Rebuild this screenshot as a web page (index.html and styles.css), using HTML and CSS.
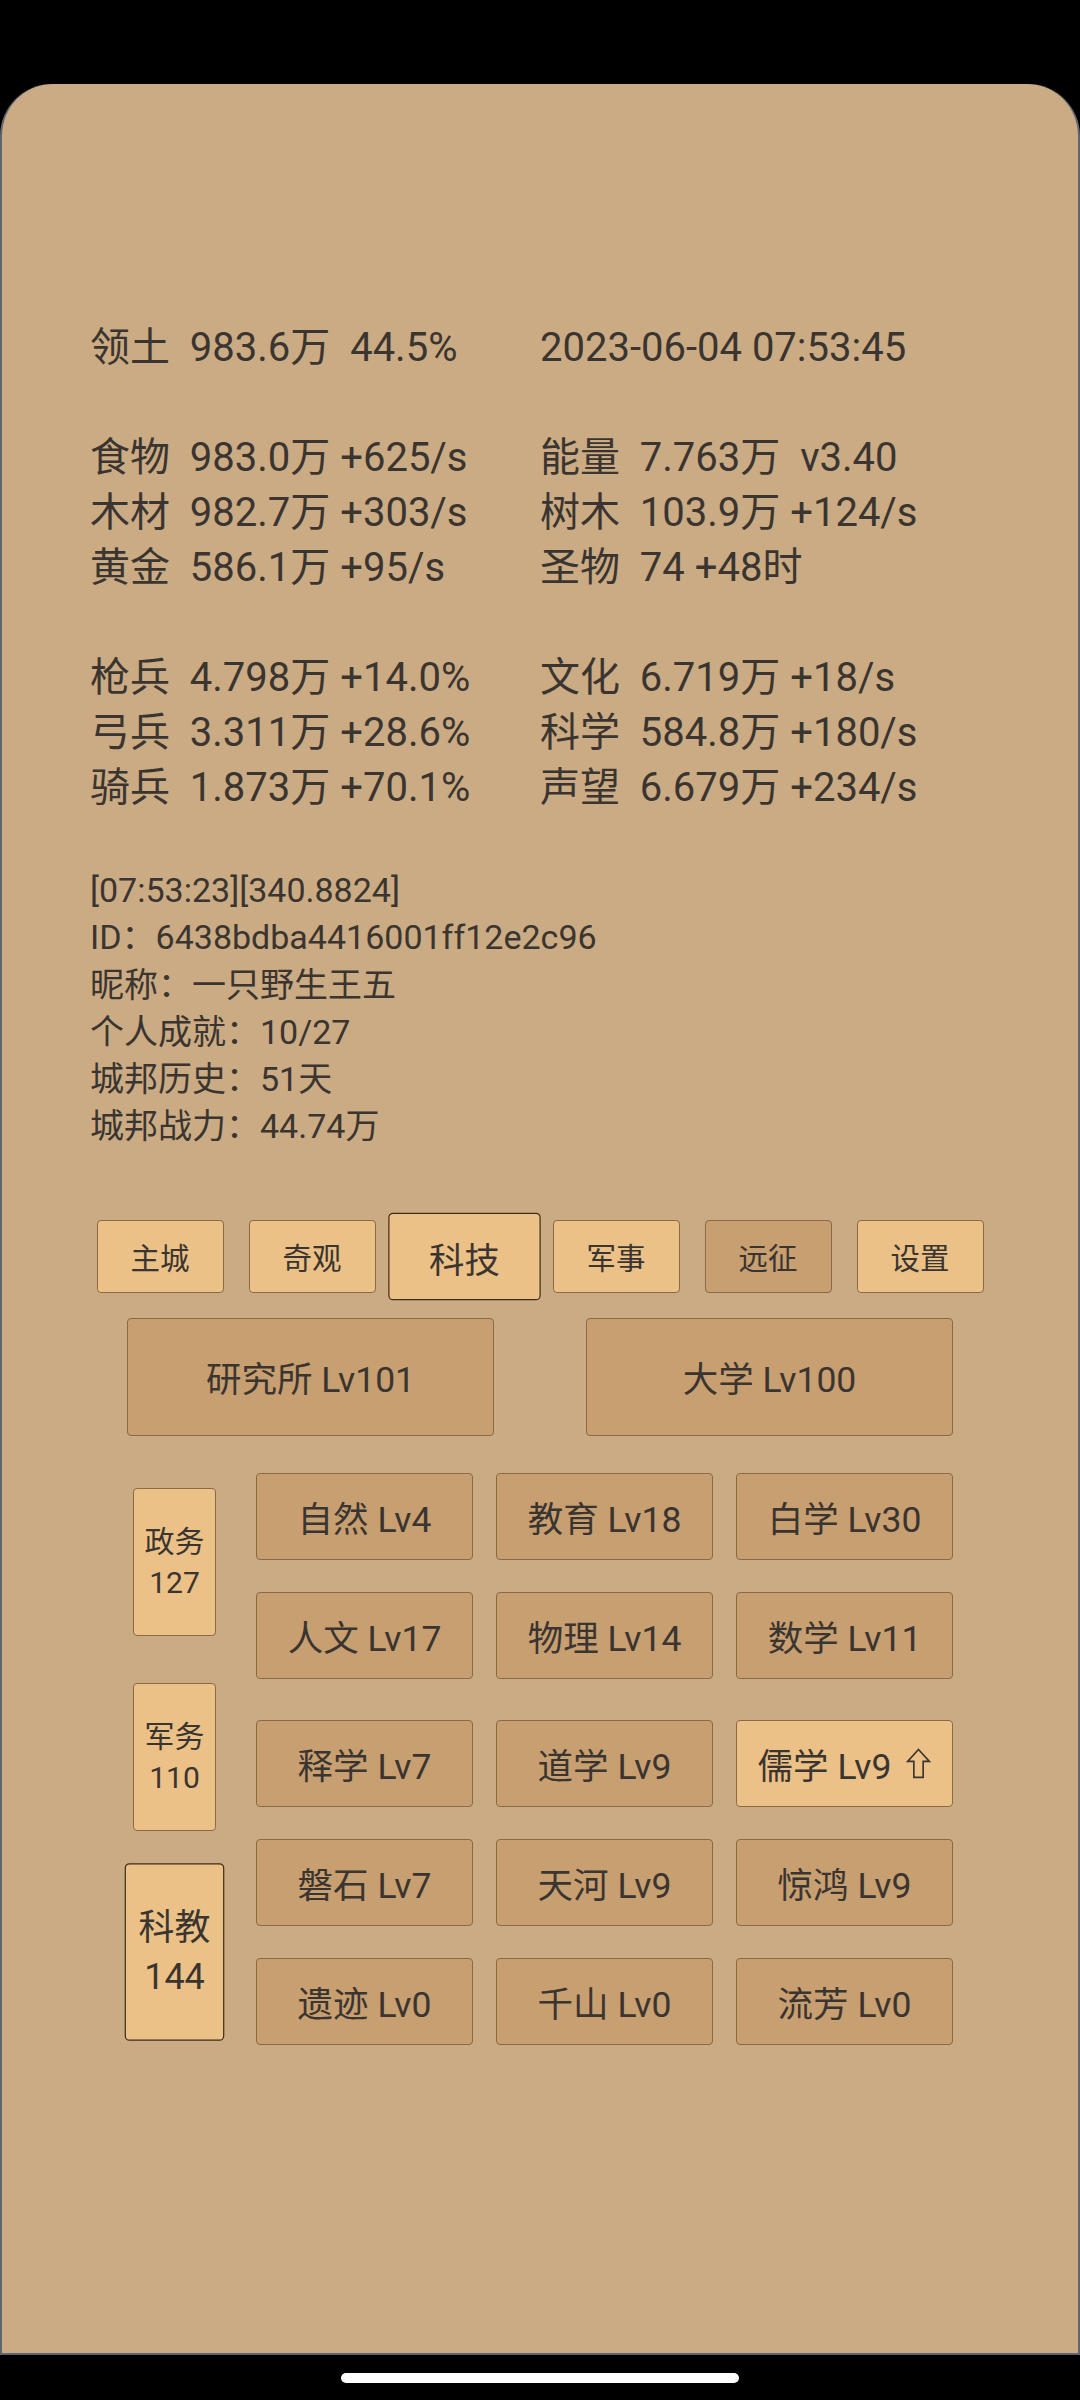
FILE: index.html
```html
<!DOCTYPE html>
<html lang="zh-CN">
<head>
    <meta charset="UTF-8">
    <title>城邦</title>
    <link rel="stylesheet" href="styles.css">
</head>
<body>
    <div class="screen">
        <div class="panel">
            <div class="stats">
                <div class="stat-row"><span>领土  983.6万  44.5%</span><span>2023-06-04 07:53:45</span></div>
                <div class="blank"></div>
                <div class="stat-row"><span>食物  983.0万 +625/s</span><span>能量  7.763万  v3.40</span></div>
                <div class="stat-row"><span>木材  982.7万 +303/s</span><span>树木  103.9万 +124/s</span></div>
                <div class="stat-row"><span>黄金  586.1万 +95/s</span><span>圣物  74 +48时</span></div>
                <div class="blank"></div>
                <div class="stat-row"><span>枪兵  4.798万 +14.0%</span><span>文化  6.719万 +18/s</span></div>
                <div class="stat-row"><span>弓兵  3.311万 +28.6%</span><span>科学  584.8万 +180/s</span></div>
                <div class="stat-row"><span>骑兵  1.873万 +70.1%</span><span>声望  6.679万 +234/s</span></div>
            </div>

            <div class="info">
                <div>[07:53:23][340.8824]</div>
                <div>ID：6438bdba4416001ff12e2c96</div>
                <div>昵称：一只野生王五</div>
                <div>个人成就：10/27</div>
                <div>城邦历史：51天</div>
                <div>城邦战力：44.74万</div>
            </div>

            <div class="tabs">
                <div class="btn tab">主城</div>
                <div class="btn tab">奇观</div>
                <div class="btn tab active">科技</div>
                <div class="btn tab">军事</div>
                <div class="btn tab dark">远征</div>
                <div class="btn tab">设置</div>
            </div>

            <div class="buildings">
                <div class="btn dark building">研究所 Lv101</div>
                <div class="btn dark building">大学 Lv100</div>
            </div>

            <div class="tech">
                <div class="side">
                    <div class="btn side-btn"><span>政务</span><span>127</span></div>
                    <div class="btn side-btn"><span>军务</span><span>110</span></div>
                    <div class="btn side-btn active"><span>科教</span><span>144</span></div>
                </div>
                <div class="tech-grid">
                    <div class="tech-row">
                        <div class="btn dark cell">自然 Lv4</div>
                        <div class="btn dark cell">教育 Lv18</div>
                        <div class="btn dark cell">白学 Lv30</div>
                    </div>
                    <div class="tech-row">
                        <div class="btn dark cell">人文 Lv17</div>
                        <div class="btn dark cell">物理 Lv14</div>
                        <div class="btn dark cell">数学 Lv11</div>
                    </div>
                    <div class="tech-row group-start">
                        <div class="btn dark cell">释学 Lv7</div>
                        <div class="btn dark cell">道学 Lv9</div>
                        <div class="btn cell">儒学 Lv9
                            <svg class="up" viewBox="0 0 24 30" width="25" height="31">
                                <path d="M12 1.5 L22.5 13 H16.5 V28.5 H7.5 V13 H1.5 Z" fill="none" stroke="#3a3530" stroke-width="1.6" stroke-linejoin="miter"/>
                            </svg>
                        </div>
                    </div>
                    <div class="tech-row">
                        <div class="btn dark cell">磐石 Lv7</div>
                        <div class="btn dark cell">天河 Lv9</div>
                        <div class="btn dark cell">惊鸿 Lv9</div>
                    </div>
                    <div class="tech-row">
                        <div class="btn dark cell">遗迹 Lv0</div>
                        <div class="btn dark cell">千山 Lv0</div>
                        <div class="btn dark cell">流芳 Lv0</div>
                    </div>
                </div>
            </div>
        </div>
        <div class="home-bar"></div>
    </div>
</body>
</html>
```

FILE: styles.css
```css
* {
    margin: 0;
    padding: 0;
    box-sizing: border-box;
}

body {
    background: #000;
    font-family: Roboto, "Noto Sans CJK SC", sans-serif;
    color: #3a3530;
}

.screen {
    width: 1080px;
    height: 2400px;
    padding-top: 84px;
}

.panel {
    height: 2271px;
    background: #cbab83;
    border: 2px solid #5e6571;
    border-top: none;
    border-radius: 52px 52px 0 0;
    padding-top: 236px;
}

.stats {
    padding-left: 88px;
    font-size: 40px;
    line-height: 55px;
}

.stat-row {
    display: grid;
    grid-template-columns: 450px auto;
    white-space: pre;
}

.blank {
    height: 55px;
}

.info {
    margin-top: 52px;
    padding-left: 88px;
    font-size: 34px;
    line-height: 47.3px;
}

.btn {
    display: flex;
    align-items: center;
    justify-content: center;
    background: #ebc187;
    border: 1.5px solid #8a6a45;
    border-radius: 4px;
}

.btn.dark {
    background: #c89f70;
}

.btn.active {
    transform: scale(1.2);
    border-color: #3d2c1a;
}

.tabs {
    margin-top: 69px;
    display: flex;
    justify-content: center;
    gap: 25px;
}

.tab {
    width: 127px;
    height: 73px;
    font-size: 29.5px;
}

.buildings {
    margin-top: 25px;
    display: flex;
    justify-content: center;
    gap: 92px;
}

.building {
    width: 367px;
    height: 118px;
    font-size: 35.5px;
}

.tech {
    margin-top: 37px;
    padding-left: 131px;
    display: flex;
    gap: 40px;
}

.side {
    padding-top: 15px;
    display: flex;
    flex-direction: column;
    gap: 47px;
}

.side-btn {
    width: 83px;
    height: 148px;
    flex-direction: column;
    font-size: 30px;
    line-height: 41px;
}

.tech-grid {
    display: flex;
    flex-direction: column;
    gap: 32px;
}

.tech-row {
    display: flex;
    gap: 23px;
}

.tech-row.group-start {
    margin-top: 9px;
}

.cell {
    width: 217px;
    height: 87px;
    font-size: 35.5px;
    white-space: nowrap;
}

.up {
    margin-left: 15px;
}

.home-bar {
    width: 398px;
    height: 10px;
    margin: 18px auto 0;
    background: #fff;
    border-radius: 5px;
}
```
